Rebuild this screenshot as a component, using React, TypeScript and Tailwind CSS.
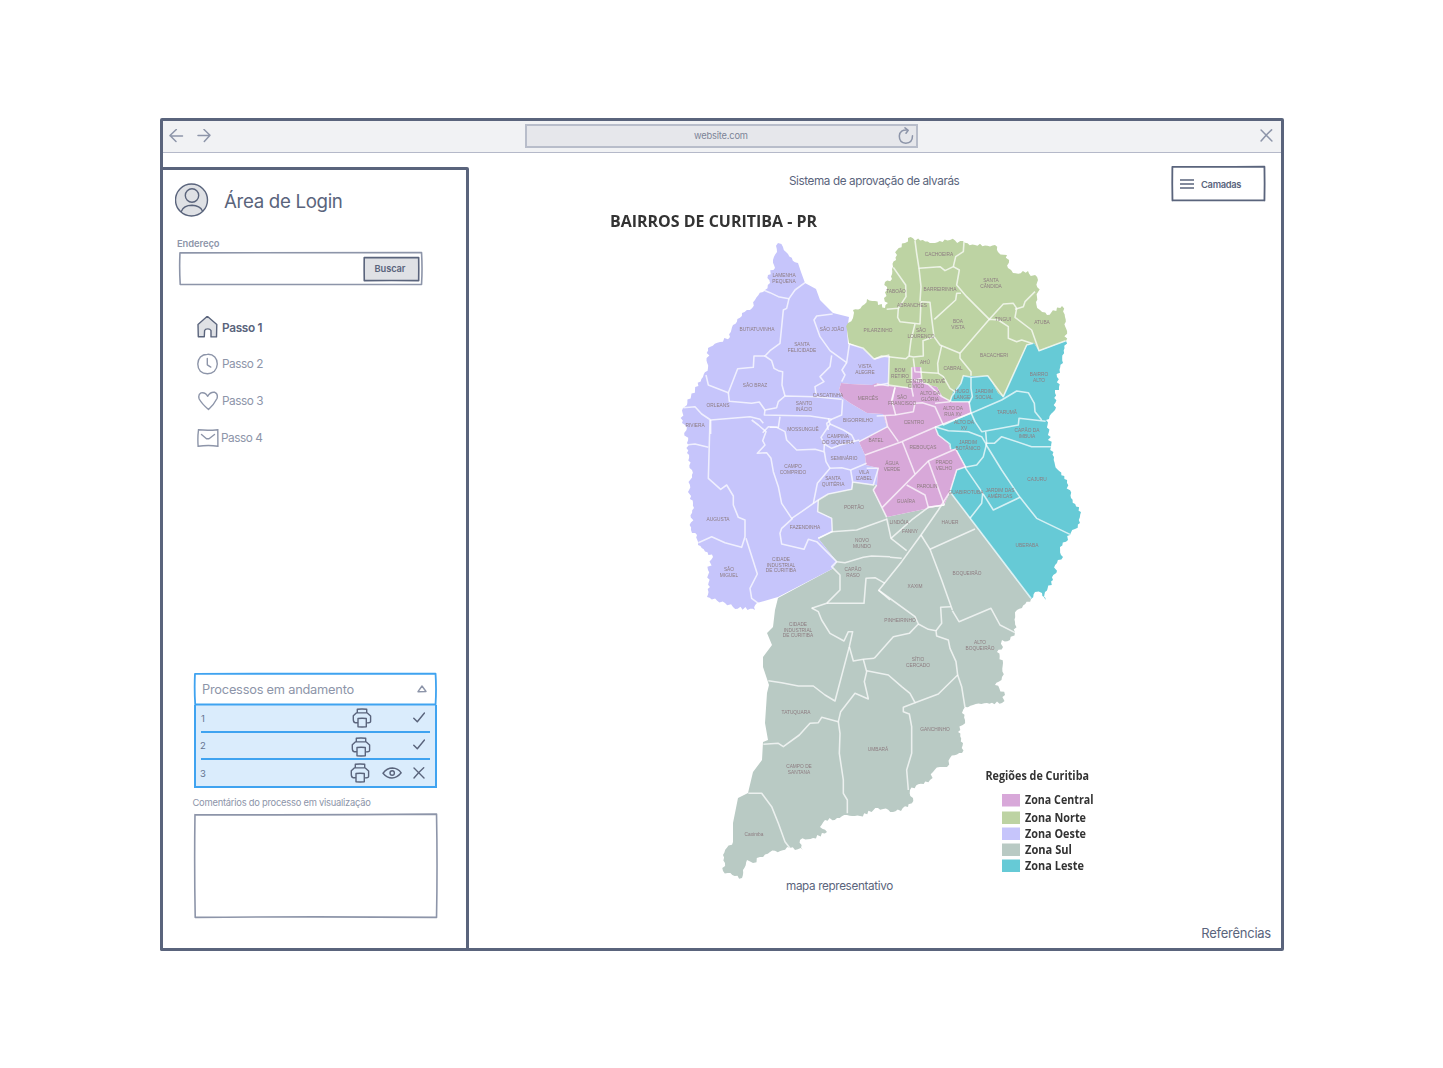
import type { ReactNode } from "react";

type Point = [number, number];
type Edge = { rough?: boolean; d: string };

const parse = (d: string): Point[] =>
  d.trim().split(/\s+/).map((p) => p.split(",").map(Number) as Point);

/* Small repeatable noise so that coast lines look ragged but never change. */
const noise = (n: number) => {
  const s = Math.sin(n * 127.1 + 311.7) * 43758.5453;
  return (s - Math.floor(s)) * 2 - 1;
};

function outline(edges: Edge[]): string {
  const out: Point[] = [];
  let seed = 1;
  for (const edge of edges) {
    const pts = parse(edge.d);
    pts.forEach((p, i) => {
      const prev = pts[i - 1];
      if (edge.rough && prev) {
        const dx = p[0] - prev[0];
        const dy = p[1] - prev[1];
        const len = Math.hypot(dx, dy) || 1;
        const steps = Math.floor(len / 2.4);
        for (let k = 1; k < steps; k++) {
          const o = noise(seed++) * 1.8;
          out.push([
            prev[0] + (dx * k) / steps - (dy / len) * o,
            prev[1] + (dy * k) / steps + (dx / len) * o,
          ]);
        }
      }
      out.push(p);
    });
  }
  return "M" + out.map((p) => p[0].toFixed(1) + "," + p[1].toFixed(1)).join("L") + "Z";
}

const ZONES: { fill: string; edges: Edge[] }[] = [
  {
    fill: "#b9cac4",
    edges: [
      { d: "853,482 877,485 873,490 882,508 887,517 944,505 950,492 1031,599" },
      {
        rough: true,
        d: "1031,599 1022,608 1017,610 1015,632 1010,640 1002,640 1003,647 997,652 1003,663 1002,677 995,685 1005,695 1002,703 987,703 973,705 965,707 962,713 965,720 958,732 963,743 962,753 950,758 947,767 940,767 933,772 930,780 910,790 913,798 908,807 893,812 878,808 860,816 847,815 837,818 825,820 820,827 827,832 813,838 800,840 803,850 790,848 770,852 760,857 753,863 747,860 743,870 742,878 723,871 725,863 723,855 733,842",
      },
      {
        d: "733,842 733,823 738,798 748,793 753,772 762,760 763,742 768,740 765,723 767,693 769,685 763,667 763,657 772,645 767,633 773,627 775,610 778,598 832,569 837,562 818,538 832,532 832,518 818,512 818,500 828,494 852,489",
      },
    ],
  },
  {
    fill: "#c6c5fb",
    edges: [
      { rough: true, d: "778,243 783,247 788,254 798,263" },
      {
        d: "798,263 801,272 805,283 816,289 820,300 833,313 849,317 847,330 848,344 863,348 874,359 889,355 888,386 872,385 850,384 841,383 839,390 843,398 850,403 867,413 883,414 887,427 859,442 865,455 866,465 878,468 877,485 853,482 852,489 828,494 818,500 818,512 832,518 832,532 818,538 837,562 832,569 778,597 757,603",
      },
      {
        rough: true,
        d: "757,603 755,610 733,607 725,603 707,597 710,587 708,570 713,557 698,545 697,535 691,530 693,503 688,492 692,470 687,453 687,443 685,425 682,423 683,408 695,390 703,377 708,368 708,348 720,342 730,337 733,325 742,313 750,310 755,300 765,290 770,283 768,275 775,268 773,260 777,252 778,243",
      },
    ],
  },
  {
    fill: "#bdd3a3",
    edges: [
      {
        rough: true,
        d: "847,330 848,323 853,318 853,310 862,306 867,299 875,301 885,308 888,303 884,298 887,290 885,282 892,279 892,269 896,260 897,250 905,243 908,238 935,243 950,240 975,245 995,245 998,252 1007,255 1008,268 1013,273 1028,271 1038,280 1038,292 1036,302 1040,310 1047,315 1062,306 1065,317 1066,341",
      },
      {
        d: "1066,341 1039,351 1034,343 1027,345 1003,397 998,393 992,382 988,376 973,377 971,376 963,376 961,383 953,392 950,402 942,396 937,387 925,384 921,378 921,367 912,367 912,388 888,386 889,356 874,359 862,348 849,343",
      },
    ],
  },
  {
    fill: "#66cad6",
    edges: [
      {
        rough: true,
        d: "1066,341 1063,363 1057,377 1059,387 1055,393 1055,410 1046,420 1051,447 1055,465 1067,483 1071,498 1081,512 1080,523 1070,535 1060,547 1063,557 1057,563 1053,580 1045,592 1046,600 1042,593 1035,592 1031,599",
      },
      {
        d: "1031,599 950,492 957,470 966,467 956,449 951,449 948,443 938,435 935,427 971,413 969,402 950,402 953,392 961,383 963,376 971,376 988,376 992,382 998,393 1003,397 1027,345 1034,343 1039,351",
      },
    ],
  },
  {
    fill: "#d8a8d9",
    edges: [
      {
        d: "841,383 850,384 872,385 877,383 888,386 912,388 912,367 921,367 921,378 925,384 937,387 942,396 950,402 969,402 971,413 935,427 938,435 948,443 951,449 956,449 966,467 957,470 950,492 944,505 887,517 882,508 873,490 877,485 878,468 866,465 865,455 859,442 887,427 883,414 867,413 850,403 843,398 839,390",
      },
    ],
  },
];

/* District borders, grouped by the quarter of the map they belong to. */
const BORDERS: { at: string; lines: string[] }[] = [
  {
    at: "translate(670 230) scale(0.33333)",
    lines: [
      "280,180 300,188 325,200 357,206 375,180 405,158",
      "357,206 350,235 340,240 330,340 300,362 285,378 305,392 312,415 325,422 338,425 336,465 345,498",
      "285,378 252,378 250,412 203,416 175,488 115,465 108,435",
      "175,488 178,514 245,520 268,516 285,540 320,533 325,515 345,498 435,500 515,508",
      "488,252 440,258 432,270 450,320 480,362 530,398 538,342",
      "485,376 480,410 450,440 462,455 435,470 438,492",
      "530,398 516,420 525,435 515,455",
      "40,533 75,530 95,552 122,570 240,560 270,568 280,580",
      "285,540 283,555 420,558 485,568 515,555 518,508",
      "330,560 325,592 300,592",
      "122,570 122,612",
      "485,568 470,580 475,600",
      "655,460 612,468",
      "538,342 580,355 612,387 658,375",
    ],
  },
  {
    at: "translate(670 420) scale(0.33333)",
    lines: [
      "120,0 115,175 152,208 170,195 190,228 190,255 205,292 225,300 225,350 215,382 165,368 125,350 85,368",
      "228,355 262,462 240,505 245,535 265,550",
      "245,0 265,15 288,35 278,62 285,75 262,100 290,98 303,115 310,155 325,200 335,250 365,295 395,275 430,250 442,190 480,145 515,143 542,150 590,130",
      "278,38 295,20 320,22 345,35 350,60 380,90 435,88 462,95 463,72 453,52 480,12 475,-5",
      "463,72 485,85 510,75 568,60",
      "480,12 520,30 545,45 555,65",
      "463,95 468,125 480,145",
      "542,150 548,186 610,195 625,145 590,145",
      "548,186 545,208 475,222 445,240 430,250",
      "445,240 443,275 485,295 487,335 445,355",
      "368,295 335,325 330,340 335,372 402,388 415,358 440,365 500,425",
      "445,355 485,335 560,330 650,298",
      "48,75 75,72 115,82",
      "500,425 525,428 580,412 605,408 660,410",
      "500,425 485,440 510,465 510,510 470,550 425,565",
      "470,550 582,550 588,475 615,473 645,490",
      "625,510 660,540",
    ],
  },
  {
    at: "translate(835 230) scale(0.33333)",
    lines: [
      "240,32 245,70 252,115 315,110 330,122 355,110 362,80 385,65 387,35",
      "175,112 212,165 213,200 190,235 155,238",
      "252,115 258,170 255,215",
      "258,215 285,217 290,265 297,320 315,345 375,370",
      "190,235 188,262 195,275 255,282 258,215",
      "240,282 228,330 222,378 213,386 140,378 118,388",
      "222,378 235,381 265,378 264,332 297,320",
      "355,110 373,120 365,165 395,200 430,235 463,268 505,222 535,220 545,235 540,262 590,300 612,362 692,332",
      "298,268 362,210 365,190 378,190",
      "375,370 463,268 490,270 520,290 520,325 545,335 560,330 590,340",
      "375,370 375,385 408,425 408,437",
      "320,347 308,400 310,430 240,425 235,385",
      "310,430 325,440 345,475 360,485",
      "600,185 570,215 565,230 540,238",
      "595,340 575,345 505,500 458,437 410,442 385,437 378,460 350,500 345,515",
      "408,442 408,475 412,500 402,520",
      "345,515 300,520",
      "160,465 230,475",
      "230,412 230,475 235,500",
      "257,412 260,445 240,450 280,463 320,500 350,515 405,515",
      "180,472 172,510",
      "163,378 160,467 125,462",
    ],
  },
  {
    at: "translate(835 380) scale(0.33333)",
    lines: [
      "125,108 180,105 235,95 240,70 262,68 300,80 325,135 408,98 402,65",
      "182,105 170,60 180,22",
      "150,108 158,140 190,185",
      "72,185 158,140",
      "90,225 200,185 300,142 408,100 500,60 545,33 580,38 598,70 600,95 620,120",
      "408,98 420,125 440,155 550,135 552,115 632,124",
      "300,140 340,152 400,155 440,170 452,190 478,190 500,170 590,200 648,200",
      "452,155 455,190 445,230 425,255 390,262",
      "202,185 240,282",
      "142,382 280,243 362,207 392,262",
      "280,243 328,375",
      "215,315 270,345 280,382 328,375",
      "390,262 440,335 475,390 555,352",
      "452,192 500,270 555,352 605,415 705,463",
      "443,340 440,370 405,415",
      "345,335 310,390 258,465 200,545 132,630",
      "155,415 168,475 215,512",
      "168,475 230,420 280,382 328,375",
      "258,465 285,508 420,447",
      "285,508 305,560 320,600 352,690",
      "345,335 588,655",
      "165,532 200,535",
      "125,315 115,330 142,385 155,412",
      "345,335 365,270 392,260",
      "300,140 310,165 345,192 347,208",
    ],
  },
  {
    at: "translate(710 580) scale(0.33333)",
    lines: [
      "175,302 215,308 265,318 310,318 345,345 375,363 418,200 428,155 415,155 402,183 360,160 335,120 325,95 305,84",
      "418,200 430,243 460,238 493,235",
      "460,238 470,275 463,305 475,357 435,340 410,372 392,395 385,425 335,412 325,428 300,430 268,465 220,500 205,490 160,493",
      "385,425 390,460 388,520 400,600 400,640 412,660 412,700",
      "115,640 155,640 185,680 205,730 225,785 240,805",
    ],
  },
  {
    at: "translate(840 580) scale(0.33333)",
    lines: [
      "103,235 160,170 208,160 235,132 225,110 115,30",
      "80,272 145,285 185,320 210,340 225,368 190,382 190,395 208,402 215,440 215,520 200,570 205,630",
      "225,368 295,342 353,285",
      "235,132 265,148 288,152 290,168 325,180 330,205 348,245 353,285 365,320 375,382",
      "288,152 305,130 302,82 332,80",
      "337,92 357,125 453,85 480,135 525,158",
    ],
  },
];

const LABELS: [number, number, string][] = [
  [784, 277, "LAMENHA"], [784, 282.5, "PEQUENA"], [757, 331, "BUTIATUVINHA"],
  [802, 346, "SANTA"], [802, 351.5, "FELICIDADE"], [832, 331, "SÃO JOÃO"],
  [755, 387, "SÃO BRAZ"], [718, 407, "ORLEANS"], [804, 405, "SANTO"], [804, 410.5, "INÁCIO"],
  [865, 368, "VISTA"], [865, 373.5, "ALEGRE"], [828, 397, "CASCATINHA"], [695, 427, "RIVIERA"],
  [803, 431, "MOSSUNGUÊ"], [858, 422, "BIGORRILHO"], [838, 438, "CAMPINA"], [838, 443.5, "DO SIQUEIRA"],
  [844, 460, "SEMINÁRIO"], [793, 468, "CAMPO"], [793, 473.5, "COMPRIDO"], [833, 480, "SANTA"],
  [833, 485.5, "QUITÉRIA"], [864, 474, "VILA"], [864, 479.5, "IZABEL"], [718, 521, "AUGUSTA"],
  [805, 529, "FAZENDINHA"], [729, 571, "SÃO"], [729, 576.5, "MIGUEL"], [781, 561, "CIDADE"],
  [781, 566.5, "INDUSTRIAL"], [781, 572, "DE CURITIBA"],
  [939, 256, "CACHOEIRA"], [896, 293, "TABOÃO"], [940, 291, "BARREIRINHA"], [912, 307, "ABRANCHES"],
  [991, 282, "SANTA"], [991, 287.5, "CÂNDIDA"], [878, 332, "PILARZINHO"], [958, 323, "BOA"], [958, 328.5, "VISTA"],
  [921, 332, "SÃO"], [921, 337.5, "LOURENÇO"], [1003, 321, "TINGUI"], [1042, 324, "ATUBA"],
  [994, 357, "BACACHERI"], [925, 364, "AHÚ"], [953, 370, "CABRAL"], [900, 372, "BOM"], [900, 377.5, "RETIRO"],
  [936, 382.5, "JUVEVÊ"], [1039, 376, "BAIRRO"], [1039, 381.5, "ALTO"], [962, 393, "HUGO"], [962, 398.5, "LANGE"],
  [984, 393, "JARDIM"], [984, 398.5, "SOCIAL"], [1007, 414, "TARUMÃ"], [964, 424, "ALTO DA"], [964, 429.5, "XV"],
  [968, 444, "JARDIM"], [968, 449.5, "BOTÂNICO"], [1027, 432, "CAPÃO DA"], [1027, 437.5, "IMBUIA"],
  [1037, 481, "CAJURU"], [966, 494, "GUABIROTUBA"], [1000, 492, "JARDIM DAS"], [1000, 497.5, "AMÉRICAS"],
  [1027, 547, "UBERABA"], [868, 400, "MERCÊS"], [902, 399, "SÃO"], [902, 404.5, "FRANCISCO"],
  [916, 382.5, "CENTRO"], [916, 388, "CÍVICO"], [930, 395, "ALTO DA"], [930, 400.5, "GLÓRIA"],
  [953, 410, "ALTO DA"], [953, 415.5, "RUA XV"], [914, 424, "CENTRO"], [876, 442, "BATEL"],
  [923, 449, "REBOUÇAS"], [892, 465, "ÁGUA"], [892, 470.5, "VERDE"], [944, 464, "PRADO"], [944, 469.5, "VELHO"],
  [927, 488, "PAROLIN"], [906, 503, "GUAÍRA"], [854, 509, "PORTÃO"], [899, 524, "LINDÓIA"],
  [910, 533, "FANNY"], [950, 524, "HAUER"], [862, 542, "NOVO"], [862, 547.5, "MUNDO"],
  [853, 571, "CAPÃO"], [853, 576.5, "RASO"], [915, 588, "XAXIM"], [967, 575, "BOQUEIRÃO"],
  [798, 626, "CIDADE"], [798, 631.5, "INDUSTRIAL"], [798, 637, "DE CURITIBA"], [900, 622, "PINHEIRINHO"],
  [918, 661, "SÍTIO"], [918, 666.5, "CERCADO"], [980, 644, "ALTO"], [980, 649.5, "BOQUEIRÃO"],
  [796, 714, "TATUQUARA"], [799, 768, "CAMPO DE"], [799, 773.5, "SANTANA"], [878, 751, "UMBARÁ"],
  [935, 731, "GANCHINHO"], [754, 836, "Caximba"],
];

const LEGEND: [number, string, string, number][] = [
  [794, "#d8a8d9", "Zona Central", 68.5],
  [811.5, "#bdd3a3", "Zona Norte", 61],
  [827.5, "#c6c5fb", "Zona Oeste", 61],
  [843.5, "#b9cac4", "Zona Sul", 47],
  [859.5, "#66cad6", "Zona Leste", 59],
];

function CuritibaMap() {
  return (
    <svg width="500" height="675" viewBox="600 205 500 675" className="block blur-[0.5px]">
      <g fontFamily='"Open Sans", "Noto Sans", sans-serif' fontWeight="700" fill="#333333">
        <text x="610" y="227" fontSize="16.5" textLength="207" lengthAdjust="spacingAndGlyphs">BAIRROS DE CURITIBA - PR</text>
        <text x="985.500" y="780" fontSize="11.5" textLength="103.500" lengthAdjust="spacingAndGlyphs">Regiões de Curitiba</text>
        {LEGEND.map(([y, fill, name, w]) => (
          <g key={name}>
            <rect x="1002" y={y} width="18" height="12.500" fill={fill} />
            <text x="1025" y={y + 10.3} fontSize="11.8" textLength={w} lengthAdjust="spacingAndGlyphs">{name}</text>
          </g>
        ))}
      </g>
      {ZONES.map((z) => (
        <path key={z.fill} d={outline(z.edges)} fill={z.fill} />
      ))}
      {BORDERS.map((b) => (
        <g key={b.at} transform={b.at} fill="none" stroke="#ffffff" strokeOpacity="0.72" strokeWidth="4.700" strokeLinejoin="round">
          {b.lines.map((l) => (
            <polyline key={l} points={l} />
          ))}
        </g>
      ))}
      <g fontFamily='"Liberation Sans", Arial, sans-serif' fontSize="4.800" textAnchor="middle" fill="#8d7c80" className="blur-[0.4px]">
        {LABELS.map(([x, y, t]) => (
          <text key={x + "-" + y} x={x} y={y}>{t}</text>
        ))}
      </g>
    </svg>
  );
}

/* A box whose outline is drawn slightly out of true, like a pen stroke. */
function SketchBox({ className, stroke, width = 1.6, children }: { className: string; stroke: string; width?: number; children?: ReactNode }) {
  return (
    <div className={"relative " + className}>
      <svg className="pointer-events-none absolute inset-0 h-full w-full overflow-visible" viewBox="0 0 100 100" preserveAspectRatio="none" fill="none" stroke={stroke} strokeWidth={width} strokeLinejoin="round">
        <path vectorEffect="non-scaling-stroke" d="M0.400 2.500 Q50 3 99.400 2 Q99.800 50 99.400 98.500 Q50 97.500 0.500 98.500 Q0.100 50 0.400 2.500Z" />
      </svg>
      {children}
    </div>
  );
}

const stroke = { fill: "none", strokeLinecap: "round", strokeLinejoin: "round" } as const;

function Printer() {
  return (
    <svg width="20" height="20" viewBox="0 0 20 20" {...stroke} stroke="#5a647c" strokeWidth="1.400">
      <path d="M5.300 4.700V1.300Q10 .8 14.700 1.300V4.700M5.500 14.800H3.200Q1.200 14.500 1.300 11V7.800L4.300 4.900H15.300L18.600 8V13.500Q18.500 15 14.800 14.900" />
      <path d="M6 10.500Q10 10 14.300 10.500V18.800Q10 19.100 6 18.800Z" />
    </svg>
  );
}

function Check() {
  return (
    <svg width="12" height="12" viewBox="0 0 12 12" {...stroke} stroke="#5a647c" strokeWidth="1.500">
      <path d="M.8 6.300 4.300 9.700 11.500 1" />
    </svg>
  );
}

function Cross({ size, color }: { size: number; color: string }) {
  return (
    <svg width={size} height={size} viewBox="0 0 12 12" {...stroke} stroke={color} strokeWidth="1.400">
      <path d="M1 1 11 11M10.700 .8Q6 5 1 11" />
    </svg>
  );
}

function Eye() {
  return (
    <svg width="20" height="12" viewBox="0 0 20 12" {...stroke} stroke="#5a647c" strokeWidth="1.400">
      <path d="M1 6.200Q5 1 10.500 1Q16 1.200 19.200 5.800Q15 11 10 11Q5 11 1 6.200Z" />
      <circle cx="10.200" cy="6" r="2.200" />
    </svg>
  );
}

const STEPS: { label: string; active?: boolean; text: string; icon: ReactNode }[] = [
  {
    label: "Passo 1",
    active: true,
    text: "ml-[3px]",
    icon: <path d="M1 8.500 10.300 0.300 19.800 8.500 19.500 20.900H14V14.500Q13 12.800 10.500 12.900Q8.300 12.900 7.600 14.500L7.300 20.800 1.300 20.700Z" fill="#dfe1e5" stroke="#5a647c" />,
  },
  {
    label: "Passo 2",
    text: "ml-[3px]",
    icon: (
      <>
        <path d="M10.500 1.200Q15 1 17.800 3.900Q20.400 6.700 20.300 11Q20 15.700 17.300 18.300Q14.600 20.700 10.500 20.700Q6 20.700 3.400 18.300Q.8 15.500 .8 11Q.8 6.700 3.400 3.900Q6 1.300 10.500 1.200Z" />
        <path d="M10.300 5.500V11.800L13.800 14.100" />
      </>
    ),
  },
  {
    label: "Passo 3",
    text: "ml-[3px]",
    icon: <path d="M11.500 19.500Q5 14 2.200 9Q.8 4.500 4 2.900Q8.500 2 10.600 6.300Q13.500 1.500 17.800 2.300Q21.300 4 20 8.500Q17 14.500 11.500 19.500Z" />,
  },
  {
    label: "Passo 4",
    text: "ml-[2px]",
    icon: (
      <>
        <path d="M1.500 2.800Q11 3.700 20.800 2.700L20.900 19.200Q11 17.700 1.100 19.300Q.5 10 1.500 2.800Z" strokeLinejoin="miter" />
        <path d="M4.500 7.500 9.500 11.800H12L17.500 7.500" />
      </>
    ),
  },
];

export default function App() {
  return (
    <div className="h-[1068px] w-[1443px] overflow-hidden bg-white pt-[118px] pl-[160px] font-['Inter',sans-serif] text-[#5a647c]">
      <div className="flex h-[833px] w-[1124px] flex-col rounded-[2px] border-[3px] border-[#5a647c]">
        <header className="flex h-[32px] shrink-0 items-center border-b-[1.500px] border-[#b5b9c9] bg-[#f1f2f4] pb-[2px]">
          <svg width="44" height="14" viewBox="0 0 44 14" className="ml-[6px]" {...stroke} stroke="#8d95a9" strokeWidth="1.500">
            <path d="M7.300 .5 1 6.500 7 12.500M1 6.700 13.500 7" />
            <path d="M35 .5 41 6.300 35.300 12.500M29 6.500 41 6.300" />
          </svg>
          <div className="ml-[312px] flex h-[24px] w-[393px] items-center border-2 border-[#b8bdca] bg-[#e6e7eb] pl-[167px]">
            <span className="text-[9.300px] leading-none tracking-[-0.180px] text-[#7c8497]">website.com</span>
            <svg width="16" height="18" viewBox="0 0 16 18" className="mr-[2px] ml-auto" {...stroke} stroke="#8d95a9" strokeWidth="1.500">
              <path d="M10 3.200Q1.800 2.300 1.300 9Q1.300 15.800 7.800 16.300Q14.500 16 14.500 8.800M7 .8 10.200 3.300 8 6.200" />
            </svg>
          </div>
          <div className="mr-[8px] ml-auto">
            <Cross size={13} color="#8d95a9" />
          </div>
        </header>

        <div className="flex min-h-0 flex-1">
          <aside className="mt-[14px] -mb-[3px] -ml-[3px] flex w-[309px] shrink-0 flex-col rounded-[2px] border-[3px] border-[#5a647c]">
            <div className="mt-[13px] ml-[12px] flex h-[34px] items-center">
              <svg width="34" height="34" viewBox="0 0 34 34" {...stroke} stroke="#5a647c" strokeWidth="1.400">
                <circle cx="16.500" cy="17" r="16" fill="#dfe1e5" />
                <ellipse cx="17" cy="12.500" rx="6.700" ry="6.700" />
                <path d="M6.300 28.500Q8.500 22.300 17 22.300Q25 22.500 27.500 28" />
              </svg>
              <h1 className="ml-[15px] pt-[5px] text-[18.700px] leading-none tracking-[-0.330px]">Área de Login</h1>
            </div>

            <label className="mt-[22px] ml-[14px] h-[10px] text-[9.400px] leading-[10px] font-semibold tracking-[-0.080px] text-[#8d95a9]">Endereço</label>
            <SketchBox className="mt-[3px] ml-[16px] flex h-[33px] w-[244px] items-center justify-end pr-[4px]" stroke="#8d95a9">
              <SketchBox className="flex h-[24px] w-[55px] items-center justify-center bg-[#dfe1e5]" stroke="#5a647c">
                <span className="relative pr-[3px] text-[9.300px] leading-none font-semibold tracking-[-0.100px]">Buscar</span>
              </SketchBox>
            </SketchBox>

            <nav className="mt-[24px] ml-[34px] flex h-[147px] flex-col justify-between">
              {STEPS.map((s) => (
                <div key={s.label} className="flex h-[36px] items-center">
                  <svg width="22" height="22" viewBox="0 0 22 22" {...stroke} stroke="#8d95a9" strokeWidth="1.400">{s.icon}</svg>
                  <span className={s.text + (s.active ? " pt-[4px] text-[11.800px] leading-none font-semibold tracking-[-0.300px]" : " pt-[2px] text-[11.800px] leading-none tracking-[-0.450px] text-[#8d95a9]")}>{s.label}</span>
                </div>
              ))}
            </nav>

            <div className="mt-auto ml-[31px] w-[243px]">
              <SketchBox className="flex h-[32px] items-center justify-between pr-[10px] pl-[8px]" stroke="#3fa3f0" width={1.8}>
                <span className="pt-[2px] text-[12.800px] leading-none tracking-[-0.220px] text-[#8d95a9]">Processos em andamento</span>
                <svg width="10" height="8" viewBox="0 0 10 8" {...stroke} stroke="#8d95a9" strokeWidth="1.400">
                  <path d="M5 1 9 6.500 1 6.700Z" />
                </svg>
              </SketchBox>
              <div className="flex h-[83px] flex-col border-2 border-t-0 border-[#3fa3f0] bg-[#daecfc] px-[5px] text-[9.500px] leading-none text-[#64738f]">
                <div className="flex h-[28px] items-center border-b-2 border-[#3fa3f0]">
                  <span className="pt-[2px]">1</span>
                  <span className="ml-auto"><Printer /></span>
                  <span className="mr-[5px] ml-[41px]"><Check /></span>
                </div>
                <div className="flex h-[27px] items-center border-b-2 border-[#3fa3f0]">
                  <span className="-ml-[1px]">2</span>
                  <span className="ml-auto pt-[3px]"><Printer /></span>
                  <span className="mr-[5px] ml-[42px] pb-[2px]"><Check /></span>
                </div>
                <div className="flex h-[26px] items-center">
                  <span className="-ml-[1px] pt-[2px]">3</span>
                  <span className="ml-auto"><Printer /></span>
                  <span className="ml-[12px]"><Eye /></span>
                  <span className="mr-[5px] ml-[11px]"><Cross size={12} color="#5a647c" /></span>
                </div>
              </div>
            </div>
            <p className="mt-[9px] ml-[29.500px] h-[11px] text-[9.400px] leading-[12px] tracking-[-0.250px] text-[#8d95a9]">Comentários do processo em visualização</p>
            <SketchBox className="mt-[4px] mb-[29px] ml-[31px] h-[107px] w-[244px] shrink-0" stroke="#8d95a9" />
          </aside>

          <main className="flex min-w-0 flex-1 flex-col">
            <div className="flex h-[52px] shrink-0 items-start pt-[13px] pr-[16px] pl-[320px]">
              <h2 className="mt-[10px] text-[11.700px] leading-none tracking-[-0.400px] whitespace-nowrap">Sistema de aprovação de alvarás</h2>
              <SketchBox className="ml-auto flex h-[35px] w-[93px] items-center pl-[8px]" stroke="#5a647c" width={1.8}>
                <svg width="14" height="10" viewBox="0 0 14 10" stroke="#5a647c" strokeWidth="1.500">
                  <path d="M0 1H14M0 5H14M0 9H14" />
                </svg>
                <span className="ml-[7px] pt-[2px] text-[9.300px] leading-none font-semibold tracking-[-0.280px]">Camadas</span>
              </SketchBox>
            </div>
            <div className="ml-[131px]">
              <CuritibaMap />
            </div>
            <p className="ml-[317px] text-[11.700px] leading-[13px] tracking-[-0.350px] whitespace-nowrap">mapa representativo</p>
            <p className="mt-auto mr-[10px] mb-[7px] self-end text-[13px] leading-[16px] tracking-[-0.250px]">Referências</p>
          </main>
        </div>
      </div>
    </div>
  );
}
